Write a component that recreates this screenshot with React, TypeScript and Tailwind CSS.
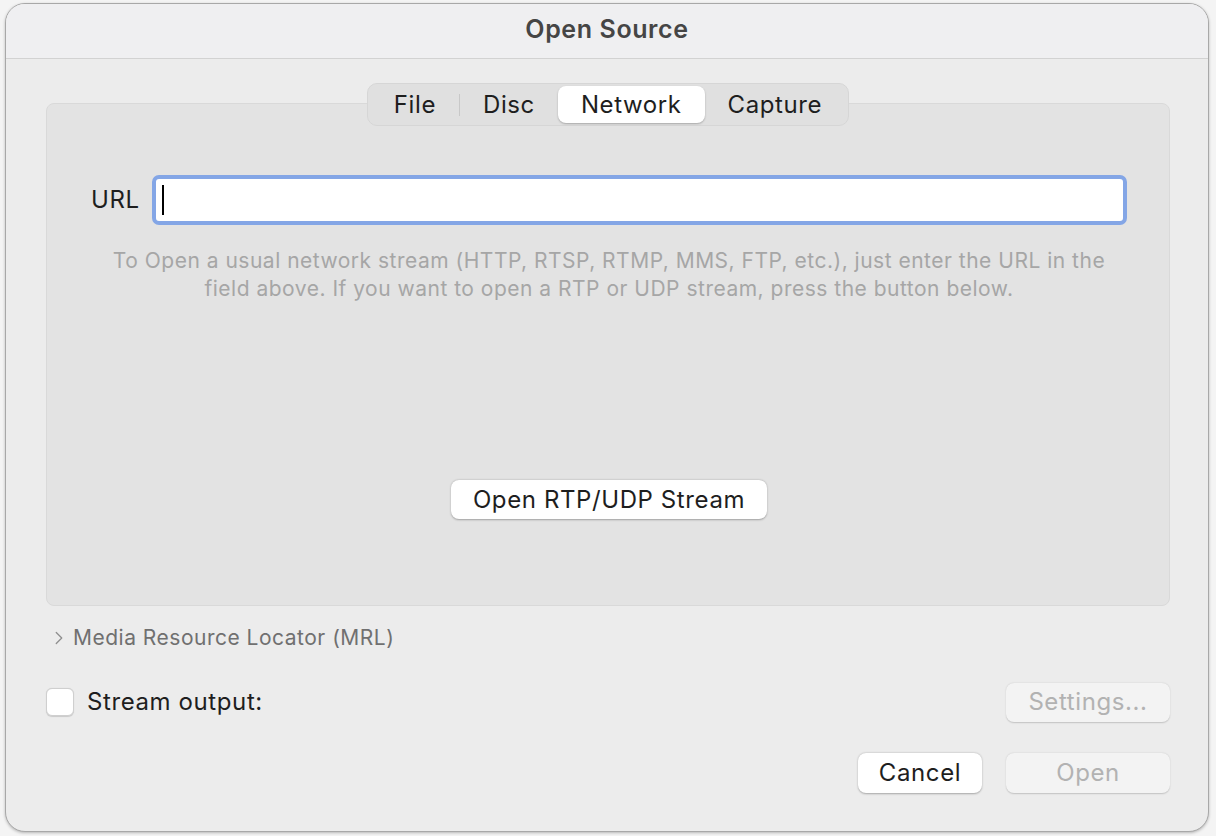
import { ChevronRight } from 'lucide-react';

const tabs = ['File', 'Disc', 'Network', 'Capture'];

const font = { fontFamily: 'Inter, "Liberation Sans", sans-serif' };

export default function App() {
  return (
    <div
      className="h-[836px] w-[1216px] bg-[#f4f4f4] pl-[5px] pt-[3px] antialiased"
      style={font}
    >
      <div className="flex h-[829px] w-[1204px] flex-col overflow-hidden rounded-[20px] border border-[#a8a8a8] bg-[#ececec] shadow-[0_1px_3px_rgba(0,0,0,0.25)]">
        {/* title bar */}
        <div className="flex h-[55px] shrink-0 items-center justify-center border-b border-[#d2d2d2] bg-[#efeff1]">
          <span className="-mt-[2px] text-[25px] font-semibold tracking-[0.6px] text-[#454545]">Open Source</span>
        </div>

        <div className="flex flex-1 flex-col pl-[40px] pr-[38px]">
          {/* tabs */}
          <div className="relative z-10 mt-[24px] flex justify-center">
            <div className="flex h-[43px] items-center rounded-[10px] border border-[#d6d6d6] bg-[#e0e0e0] px-[3px]">
              {tabs.map((t, i) => (
                <div key={t} className="flex items-center">
                  {i === 1 && <div className="h-[22px] w-px bg-[#c8c8c8]" />}
                  <div
                    className={
                      t === 'Network'
                        ? 'flex h-[37px] items-center rounded-[8px] bg-white px-[23px] text-[24px] tracking-[0.6px] text-[#1e1e1e] shadow-[0_1px_2px_rgba(0,0,0,0.25)]'
                        : 'flex h-[37px] items-center px-[23px] text-[24px] tracking-[0.6px] text-[#1e1e1e]'
                    }
                  >
                    {t}
                  </div>
                </div>
              ))}
            </div>
          </div>

          {/* panel */}
          <div className="-mt-[23px] flex h-[503px] flex-col rounded-[8px] border border-[#d9d9d9] bg-[#e3e3e3] pl-[44px] pr-[42px]">
            <div className="mt-[71px] flex items-center">
              <span className="text-[24px] tracking-[0.6px] text-[#1e1e1e]">URL</span>
              <div className="ml-[12px] flex h-[50px] flex-1 items-center rounded-[7px] border-[4px] border-[#84a6e6] bg-white pl-[6px]">
                <div className="h-[30px] w-[2px] bg-black" />
              </div>
            </div>
            <div className="mt-[22px] text-center text-[21px] leading-[28px] tracking-[0.5px] text-[#a6a6a6]">
              <div className="whitespace-nowrap">
                To Open a usual network stream (HTTP, RTSP, RTMP, MMS, FTP, etc.), just enter the URL in the
              </div>
              <div className="whitespace-nowrap">
                field above. If you want to open a RTP or UDP stream, press the button below.
              </div>
            </div>
            <div className="mt-[177px] flex justify-center">
              <button className="h-[39px] rounded-[8px] bg-white px-[22px] text-[24px] tracking-[0.6px] text-[#1e1e1e] shadow-[0_0.5px_2px_rgba(0,0,0,0.3)]">
                Open RTP/UDP Stream
              </button>
            </div>
          </div>

          {/* MRL */}
          <div className="mt-[16px] flex items-center text-[#707070]">
            <ChevronRight size={22} strokeWidth={1.4} className="ml-[2px] text-[#8e8e8e]" />
            <span className="ml-[3px] text-[21px] tracking-[0.5px]">Media Resource Locator (MRL)</span>
          </div>

          {/* stream output */}
          <div className="mt-[29px] flex items-center justify-between">
            <div className="flex items-center">
              <div className="h-[28px] w-[28px] rounded-[6px] border border-[#cfcfcf] bg-white shadow-[0_0.5px_1px_rgba(0,0,0,0.15)]" />
              <span className="ml-[13px] text-[24px] tracking-[0.6px] text-[#1e1e1e]">Stream output:</span>
            </div>
            <button className="h-[39px] w-[164px] rounded-[8px] bg-[#f3f3f3] text-[24px] tracking-[0.6px] text-[#b2b2b2] shadow-[0_0.5px_1.5px_rgba(0,0,0,0.18)]">
              Settings...
            </button>
          </div>

          {/* actions */}
          <div className="mt-[31px] flex justify-end gap-[24px]">
            <button className="h-[40px] w-[124px] rounded-[8px] bg-white text-[24px] tracking-[0.6px] text-[#1e1e1e] shadow-[0_0.5px_2px_rgba(0,0,0,0.3)]">
              Cancel
            </button>
            <button className="h-[40px] w-[164px] rounded-[8px] bg-[#f3f3f3] text-[24px] tracking-[0.6px] text-[#b2b2b2] shadow-[0_0.5px_1.5px_rgba(0,0,0,0.18)]">
              Open
            </button>
          </div>
        </div>
      </div>
    </div>
  );
}
